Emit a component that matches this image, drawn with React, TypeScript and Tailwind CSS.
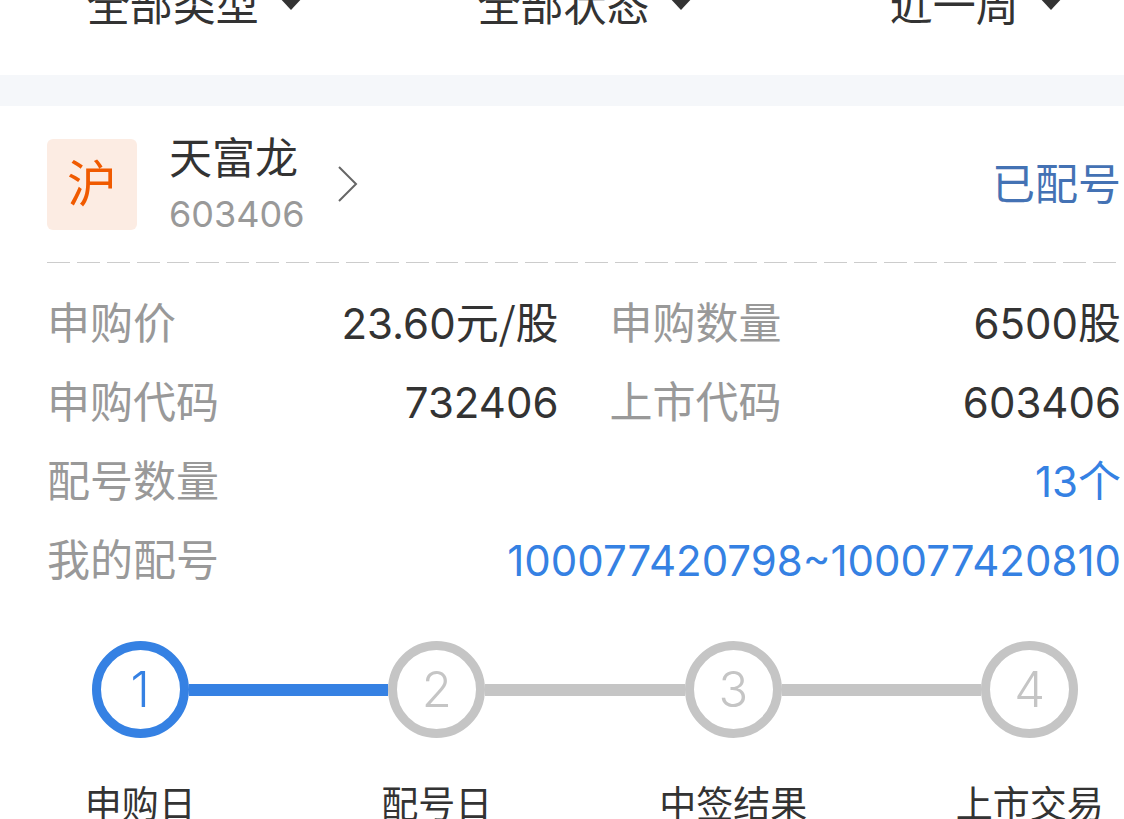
import { clsx } from 'clsx';

type Field = {
    label: string;
    value: string;
    unit?: string;
    highlight?: boolean;
    wide?: boolean;
};

const filters = [
    { id: 'type', label: '类型', value: '全部类型' },
    { id: 'status', label: '状态', value: '全部状态' },
    { id: 'period', label: '时间', value: '近一周' },
];

const fields: Field[] = [
    { label: '申购价', value: '23.60', unit: '元/股' },
    { label: '申购数量', value: '6500', unit: '股' },
    { label: '申购代码', value: '732406' },
    { label: '上市代码', value: '603406' },
    { label: '配号数量', value: '13', unit: '个', highlight: true, wide: true },
    { label: '我的配号', value: '100077420798~100077420810', highlight: true, wide: true },
];

const steps = ['申购日', '配号日', '中签结果', '上市交易'];
const currentStep = 0;

function FilterBar() {
    return (
        <div className="shrink-0 overflow-hidden">
            <div className="-mt-[25px] -mr-[48px] grid grid-cols-3 pb-10">
                {filters.map((filter) => (
                    <label key={filter.id} className="flex items-center justify-center gap-[19px]">
                        <select
                            aria-label={filter.label}
                            className="h-[60px] appearance-none field-sizing-content bg-transparent text-[43px] leading-[60px] outline-none"
                        >
                            <option>{filter.value}</option>
                        </select>
                        <svg className="mb-1 h-[14px] w-[26px]" viewBox="0 0 26 14" fill="currentColor">
                            <path d="M0 0h26L13 14z" />
                        </svg>
                    </label>
                ))}
            </div>
        </div>
    );
}

function StockHeader() {
    return (
        <div className="flex items-center pr-[3px]">
            <span className="flex h-[91px] w-[90px] items-center justify-center rounded-md bg-[#fcece3] text-[50px] leading-none text-[#f05a00]">
                沪
            </span>
            <a href="#603406" className="ml-8 flex items-center gap-8">
                <span className="flex flex-col">
                    <span className="text-[43px] leading-[60px]">天富龙</span>
                    <span className="text-[36px] leading-[52px] text-[#999]">603406</span>
                </span>
                <svg className="h-[36px] w-[22px]" viewBox="0 0 22 36" fill="none" stroke="#666" strokeWidth={2}>
                    <path d="M2 1l17 17L2 35" />
                </svg>
            </a>
            <span className="ml-auto text-[43px] leading-[60px] text-[#4472b4]">已配号</span>
        </div>
    );
}

function DashedDivider() {
    return (
        <div className="mr-2 flex gap-[7px]">
            {Array.from({ length: 36 }, (_, i) => (
                <span key={i} className="h-px flex-1 bg-[#ccc]" />
            ))}
        </div>
    );
}

function FieldList() {
    return (
        <dl className="grid grid-cols-2 gap-x-[51px] gap-y-[19px] pr-[3px] text-[43px] leading-[60px]">
            {fields.map((field) => (
                <div key={field.label} className={clsx('flex justify-between', field.wide && 'col-span-2')}>
                    <dt className="text-[#999]">{field.label}</dt>
                    <dd className={clsx(field.highlight && 'text-[#3581e3]')}>
                        <span className="text-[42px] leading-none">{field.value}</span>
                        {field.unit && (
                            <span className="font-['Noto_Sans_CJK_SC',sans-serif] leading-none">{field.unit}</span>
                        )}
                    </dd>
                </div>
            ))}
        </dl>
    );
}

function Steps() {
    return (
        <ol className="-mr-[54px] -ml-2 grid grid-cols-4">
            {steps.map((step, i) => (
                <li key={step} className="flex flex-col items-center">
                    {/* connector, circle, connector */}
                    <div className="flex w-full items-center">
                        <span
                            className={clsx(
                                'h-3 flex-1',
                                i > 0 && (i - 1 <= currentStep ? 'bg-[#3581e3]' : 'bg-[#c5c5c5]'),
                            )}
                        />
                        <span
                            className={clsx(
                                'flex size-[97px] items-center justify-center rounded-full border-[9px] text-[49px] leading-none font-light',
                                i <= currentStep ? 'border-[#3581e3] text-[#3581e3]' : 'border-[#c5c5c5] text-[#c5c5c5]',
                            )}
                        >
                            {i + 1}
                        </span>
                        <span
                            className={clsx(
                                'h-3 flex-1',
                                i < steps.length - 1 && (i <= currentStep ? 'bg-[#3581e3]' : 'bg-[#c5c5c5]'),
                            )}
                        />
                    </div>
                    <span className="mt-[42px] text-[37px] leading-[50px]">{step}</span>
                </li>
            ))}
        </ol>
    );
}

export default function App() {
    return (
        <div className="flex h-screen flex-col overflow-hidden bg-white font-['Inter','Noto_Sans_CJK_SC',sans-serif] text-[#333]">
            <FilterBar />
            <div className="h-[31px] shrink-0 bg-[#f5f7fa]" />
            <main>
                <section className="pt-[22px] pl-[47px]">
                    <StockHeader />
                    <div className="pt-[22px] pb-[30px]">
                        <DashedDivider />
                    </div>
                    <FieldList />
                </section>
                <section className="pt-[51px]">
                    <Steps />
                </section>
            </main>
        </div>
    );
}
